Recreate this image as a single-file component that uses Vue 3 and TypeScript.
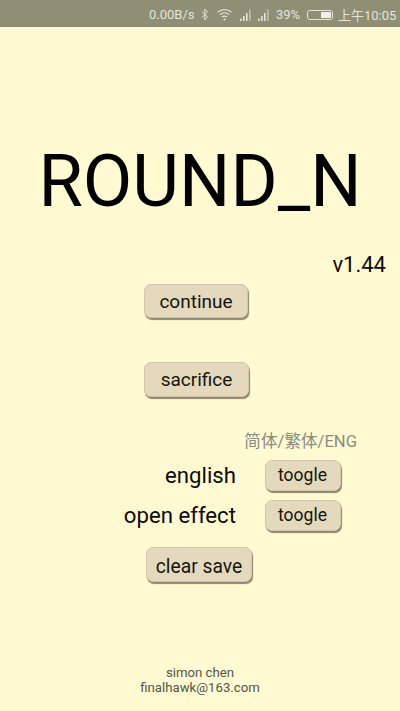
<script setup lang="ts">
const bars = [0, 1]
</script>

<template>
  <div class="page">
    <header class="status">
      <span class="speed">0.00B/s</span>
      <svg class="bt" width="8" height="13" viewBox="0 0 8 13" fill="none" stroke="#e4e4d8" stroke-width="1">
        <path d="M1 3.5 6.5 9 3.8 12V1l2.7 3L1 9.5" />
      </svg>
      <svg class="wifi" width="17" height="13" viewBox="0 0 16 13" fill="none" stroke="#e4e4d8" stroke-width="1.2">
        <path d="M1 4.2C5 .8 11 .8 15 4.2M3.2 6.6C6 4.3 10 4.3 12.8 6.6M5.4 9C7 7.8 9 7.8 10.6 9" />
        <path d="M8 10.2 9.2 11.6 8 12.8 6.8 11.6Z" fill="#e4e4d8" stroke="none" />
      </svg>
      <svg v-for="b in bars" :key="b" class="signal" width="11" height="12" viewBox="0 0 11 12" fill="#e4e4d8">
        <rect x="0" y="9.5" width="1.6" height="2.5" />
        <rect x="3" y="7" width="1.6" height="5" />
        <rect x="6" y="4" width="1.6" height="8" />
        <rect x="9" y="0.5" width="1.6" height="11.5" opacity="0.55" />
      </svg>
      <span class="pct">39%</span>
      <span class="battery"><span class="charge"></span></span>
      <span class="clock">上午10:05</span>
    </header>

    <main class="content">
      <h1 class="title">ROUND_N</h1>
      <div class="version">v1.44</div>
      <button class="btn continue">continue</button>
      <button class="btn sacrifice">sacrifice</button>
      <div class="lang">简体/繁体/ENG</div>
      <div class="row first">
        <span class="label">english</span>
        <button class="btn toggle">toogle</button>
      </div>
      <div class="row second">
        <span class="label">open effect</span>
        <button class="btn toggle">toogle</button>
      </div>
      <button class="btn clear">clear save</button>
      <footer class="credit">
        <div>simon chen</div>
        <div>finalhawk@163.com</div>
      </footer>
    </main>
  </div>
</template>

<style scoped>
.page {
  width: 400px;
  height: 711px;
  background: #fffad2;
  font-family: Roboto, "Noto Sans CJK SC", sans-serif;
  color: #0a0a0a;
  display: flex;
  flex-direction: column;
  overflow: hidden;
}
.status {
  height: 27px;
  flex: none;
  background: #8f8f76;
  color: #e4e4d8;
  font-size: 13px;
  display: flex;
  align-items: center;
  padding: 2px 0 0 149px;
  box-sizing: border-box;
}
.speed { width: 45px; }
.bt { margin-left: 7px; }
.wifi { margin-left: 7px; }
.signal { margin-left: 7px; }
.pct { margin-left: 7px; width: 24px; }
.battery {
  width: 26px;
  height: 10px;
  margin-left: 7px;
  border: 1px solid #e4e4d8;
  border-radius: 3px;
  box-sizing: border-box;
  display: flex;
  justify-content: flex-end;
  padding: 1px;
}
.charge { width: 10px; background: #f0f0e6; border-radius: 1px; }
.clock { margin-left: 5px; }
.content {
  flex: 1;
  display: flex;
  flex-direction: column;
  position: relative;
}
.title {
  margin: 113px 0 0 0;
  font-size: 72px;
  line-height: 84px;
  font-weight: 400;
  text-align: center;
  color: #000;
}
.version {
  margin: 29px 14px 0 0;
  text-align: right;
  font-size: 22px;
  line-height: 24px;
}
.btn {
  display: block;
  font-family: inherit;
  color: #15150f;
  background: #e4d9bc;
  border: 1px solid #d2c7a9;
  border-radius: 7px;
  box-shadow: 1px 2px 1px #8e876f;
  padding: 0;
  font-size: 19px;
  box-sizing: border-box;
}
.continue { width: 104px; height: 34px; margin: 7px 0 0 144px; }
.sacrifice { width: 105px; height: 35px; margin: 44px 0 0 144px; }
.lang {
  margin: 35px 43px 0 0;
  text-align: right;
  font-size: 16.6px;
  line-height: 20px;
  color: #8b8b80;
}
.row {
  display: flex;
  align-items: center;
  height: 31px;
}
.first { margin-top: 8px; }
.second { margin-top: 9px; }
.label {
  width: 236px;
  text-align: right;
  font-size: 22.2px;
  line-height: 28px;
  margin-top: -2px;
}
.toggle {
  width: 76px;
  height: 31px;
  margin-left: 28.5px;
  padding-bottom: 1px;
  font-size: 17.5px;
}
.clear {
  width: 106px;
  height: 35px;
  margin: 16px 0 0 146px;
  padding-top: 3px;
  font-size: 19.3px;
}
.credit {
  position: absolute;
  left: 0;
  right: 0;
  top: 638px;
  text-align: center;
  font-size: 13.2px;
  line-height: 15px;
  color: #55554c;
}
</style>
